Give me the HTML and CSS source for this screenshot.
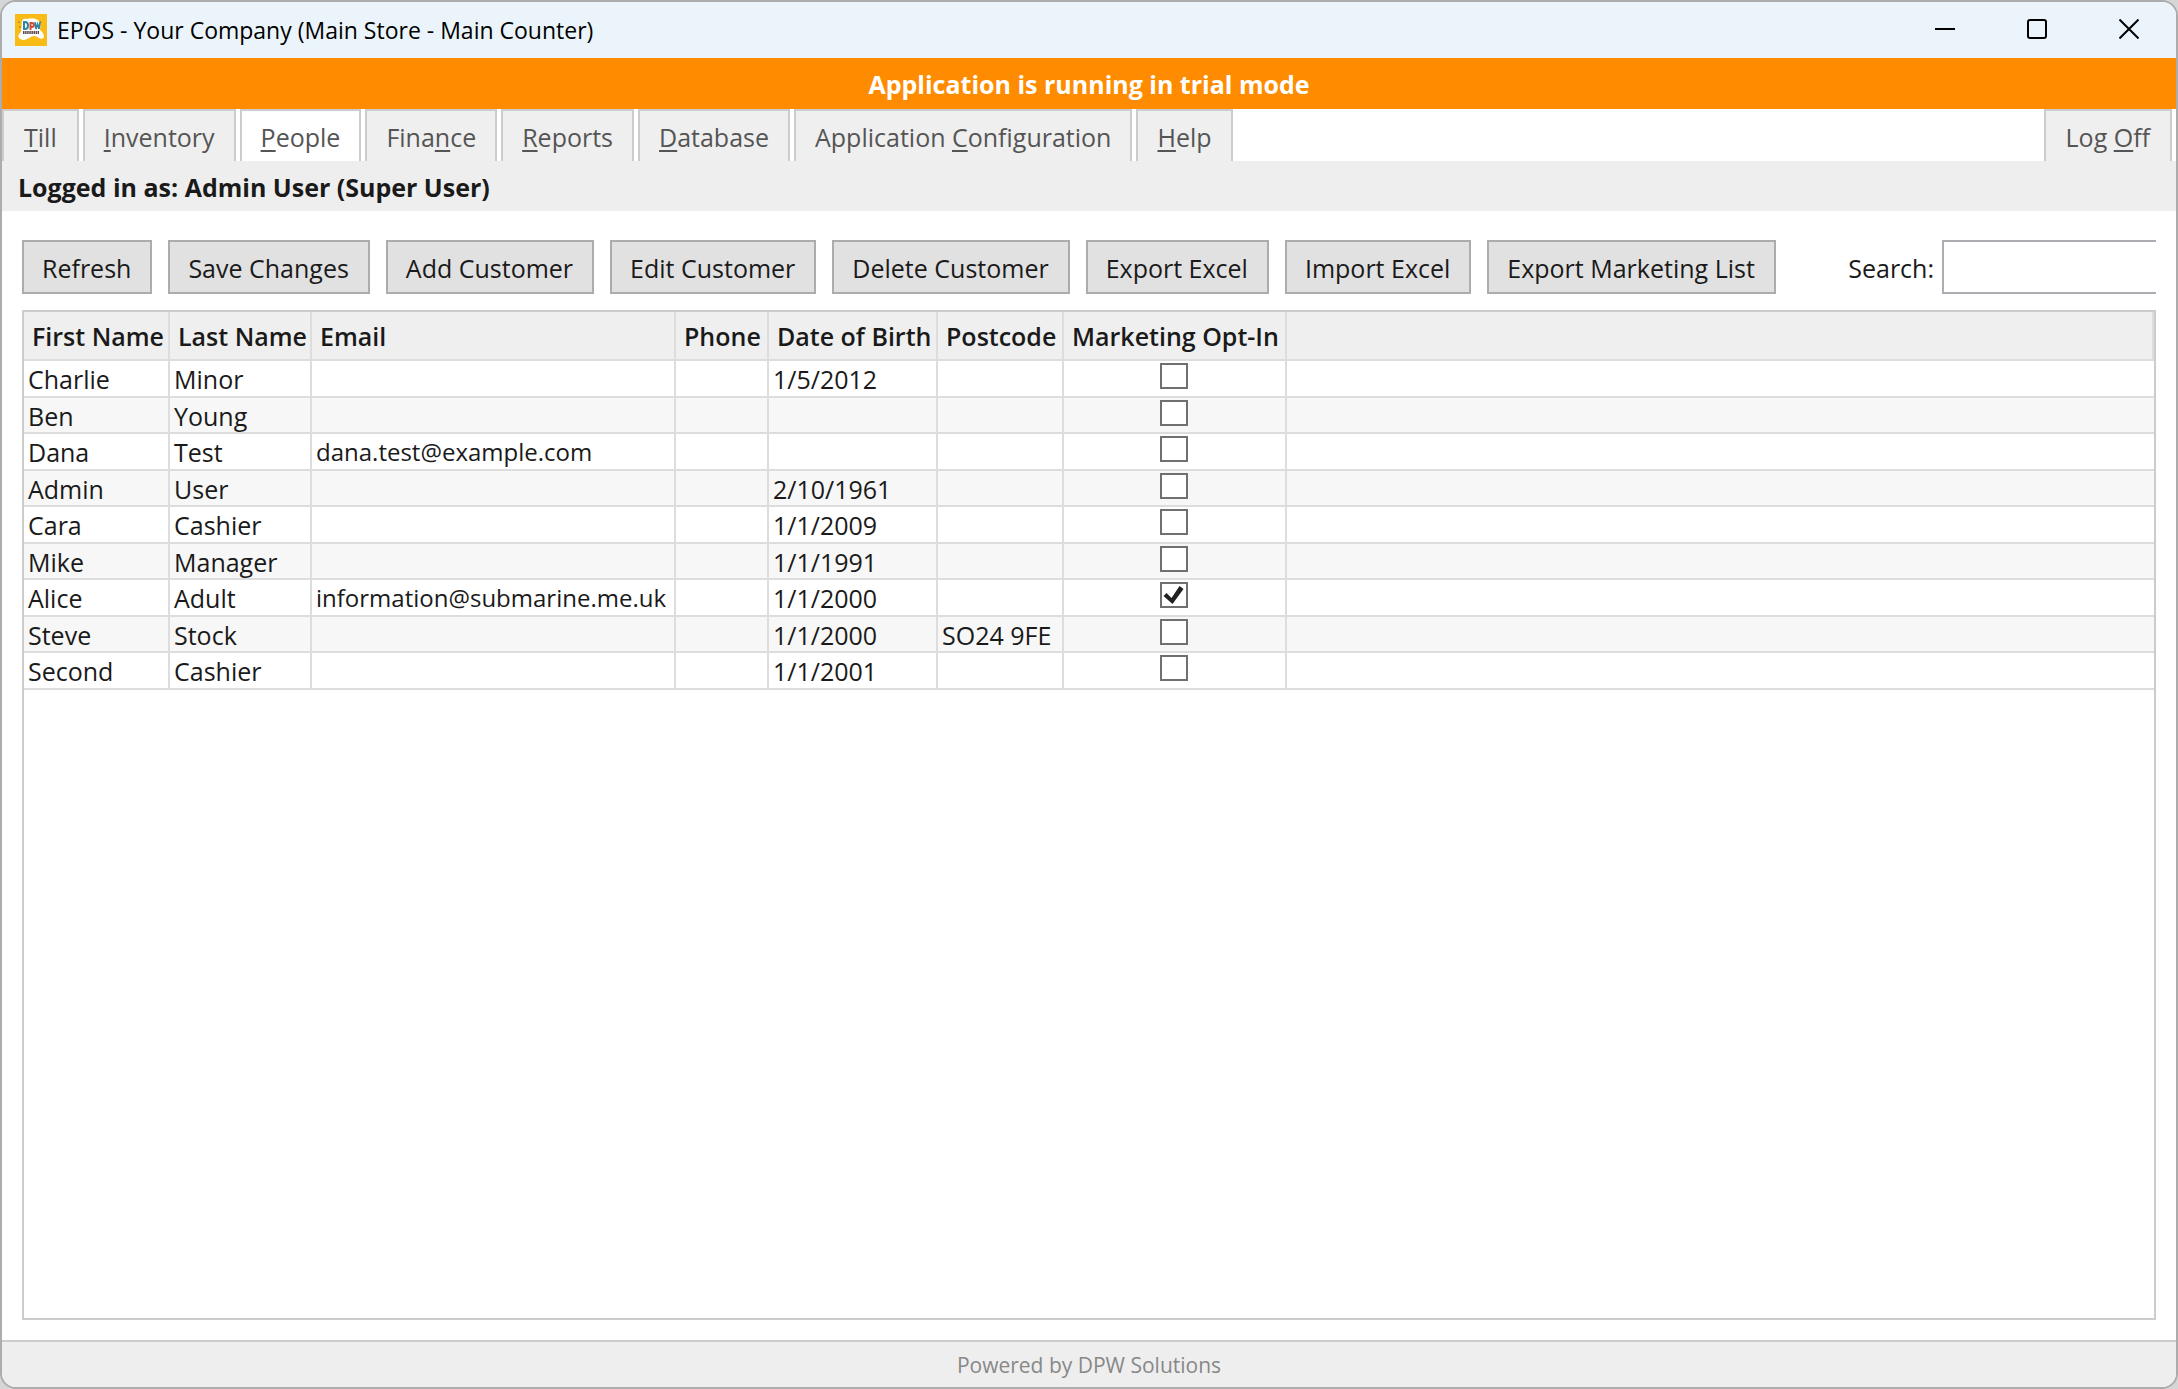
FILE: index.html
```html
<!DOCTYPE html>
<html lang="en">
<head>
<meta charset="utf-8">
<title>EPOS - Your Company (Main Store - Main Counter)</title>
<link rel="stylesheet" href="styles.css">
</head>
<body>
<div class="window">
  <header class="titlebar">
    <svg class="app-icon" viewBox="0 0 32 32" aria-hidden="true">
      <rect width="32" height="32" fill="#f9bb16"/>
      <path d="M7 7 Q8 4 12 5 Q18 3 23 6 Q26 9 25 16 Q29 19 29 23 Q28 26 24 24 Q19 20 14 24 Q8 28 4 24 Q2 21 6 18 Z" fill="#fff"/>
      <path d="M4 7v2M5 12v2M25 7l1 2" stroke="#8a7a3a" stroke-width="1"/>
      <g fill="none" stroke-width="2">
        <path d="M9 8v7h1q3 0 3-3.500t-3-3.500z" stroke="#2b86a8"/>
        <path d="M15.500 16v-7h1q2.500 0 2.500 2t-2.500 2h-1" stroke="#d9482f"/>
        <path d="M20 8l1 7 1.500-5 1.500 5 1-7" stroke="#2b86a8" stroke-width="1.600"/>
      </g>
      <path d="M8 18.500h16" stroke="#5b4a4a" stroke-width="3" stroke-dasharray="1.500 .6"/>
    </svg>
    <h1 class="title">EPOS - Your Company (Main Store - Main Counter)</h1>
    <div class="caption-buttons">
      <button class="caption-button" type="button" aria-label="Minimize"><svg viewBox="0 0 20 20"><path d="M0 10h20"/></svg></button>
      <button class="caption-button" type="button" aria-label="Maximize"><svg viewBox="0 0 20 20"><rect x="1" y="1" width="18" height="18" rx="2"/></svg></button>
      <button class="caption-button" type="button" aria-label="Close"><svg viewBox="0 0 20 20"><path d="M0.500 0.500l19 19M19.500 0.500l-19 19"/></svg></button>
    </div>
  </header>
  <div class="trial">Application is running in trial mode</div>
  <nav class="tabs">
    <button class="tab tab-first" type="button"><u>T</u>ill</button>
    <button class="tab" type="button"><u>I</u>nventory</button>
    <button class="tab tab-active" type="button"><u>P</u>eople</button>
    <button class="tab" type="button">Fina<u>n</u>ce</button>
    <button class="tab" type="button"><u>R</u>eports</button>
    <button class="tab" type="button"><u>D</u>atabase</button>
    <button class="tab" type="button">Application <u>C</u>onfiguration</button>
    <button class="tab" type="button"><u>H</u>elp</button>
    <button class="tab tab-end" type="button">Log <u>O</u>ff</button>
  </nav>
  <div class="login">Logged in as: Admin User (Super User)</div>
  <main class="content">
    <div class="toolbar">
      <button class="button" type="button">Refresh</button>
      <button class="button" type="button">Save Changes</button>
      <button class="button" type="button">Add Customer</button>
      <button class="button" type="button">Edit Customer</button>
      <button class="button" type="button">Delete Customer</button>
      <button class="button" type="button">Export Excel</button>
      <button class="button" type="button">Import Excel</button>
      <button class="button" type="button">Export Marketing List</button>
      <label class="search-label" for="search">Search:</label>
      <input class="search" id="search" type="text">
    </div>
    <div class="grid">
      <table class="customers">
        <colgroup>
          <col class="col-first"><col class="col-last"><col class="col-email"><col class="col-phone"><col class="col-dob"><col class="col-postcode"><col class="col-optin"><col>
        </colgroup>
        <thead>
          <tr><th>First Name</th><th>Last Name</th><th>Email</th><th>Phone</th><th>Date of Birth</th><th>Postcode</th><th>Marketing Opt-In</th><th></th></tr>
        </thead>
        <tbody>
          <tr><td>Charlie</td><td>Minor</td><td></td><td></td><td>1/5/2012</td><td></td><td class="optin"><input class="check" type="checkbox" aria-label="Marketing opt-in, Charlie Minor"></td><td></td></tr>
          <tr><td>Ben</td><td>Young</td><td></td><td></td><td></td><td></td><td class="optin"><input class="check" type="checkbox" aria-label="Marketing opt-in, Ben Young"></td><td></td></tr>
          <tr><td>Dana</td><td>Test</td><td class="email">dana.test@example.com</td><td></td><td></td><td></td><td class="optin"><input class="check" type="checkbox" aria-label="Marketing opt-in, Dana Test"></td><td></td></tr>
          <tr><td>Admin</td><td>User</td><td></td><td></td><td>2/10/1961</td><td></td><td class="optin"><input class="check" type="checkbox" aria-label="Marketing opt-in, Admin User"></td><td></td></tr>
          <tr><td>Cara</td><td>Cashier</td><td></td><td></td><td>1/1/2009</td><td></td><td class="optin"><input class="check" type="checkbox" aria-label="Marketing opt-in, Cara Cashier"></td><td></td></tr>
          <tr><td>Mike</td><td>Manager</td><td></td><td></td><td>1/1/1991</td><td></td><td class="optin"><input class="check" type="checkbox" aria-label="Marketing opt-in, Mike Manager"></td><td></td></tr>
          <tr><td>Alice</td><td>Adult</td><td class="email">information@submarine.me.uk</td><td></td><td>1/1/2000</td><td></td><td class="optin"><input class="check" type="checkbox" checked aria-label="Marketing opt-in, Alice Adult"></td><td></td></tr>
          <tr><td>Steve</td><td>Stock</td><td></td><td></td><td>1/1/2000</td><td>SO24 9FE</td><td class="optin"><input class="check" type="checkbox" aria-label="Marketing opt-in, Steve Stock"></td><td></td></tr>
          <tr><td>Second</td><td>Cashier</td><td></td><td></td><td>1/1/2001</td><td></td><td class="optin"><input class="check" type="checkbox" aria-label="Marketing opt-in, Second Cashier"></td><td></td></tr>
        </tbody>
      </table>
    </div>
  </main>
  <footer class="footer">Powered by DPW Solutions</footer>
</div>
</body>
</html>
```
FILE: styles.css
```css
* {
  box-sizing: border-box;
}

body {
  margin: 0;
  background: #d6d6d6;
  color: #1a1a1a;
  font: 25px/32px "Open Sans", "Noto Sans", sans-serif;
}

button,
input {
  margin: 0;
  color: inherit;
  font: inherit;
}

.window {
  display: flex;
  flex-direction: column;
  min-height: 100vh;
  overflow: hidden;
  border: 2px solid #acacac;
  border-radius: 16px;
  background: #fff;
}

.titlebar {
  display: flex;
  align-items: center;
  height: 56px;
  padding-left: 13px;
  background: #ebf4fa;
}

.app-icon {
  width: 32px;
  height: 32px;
}

.title {
  margin: 0 0 0 10px;
  color: #000;
  font-size: 23px;
  font-weight: 400;
}

.caption-buttons {
  display: flex;
  align-self: stretch;
  margin-left: auto;
}

.caption-button {
  display: flex;
  align-items: center;
  justify-content: center;
  width: 92px;
  padding: 0 2px 2px 0;
  border: 0;
  background: none;
}

.caption-button svg {
  width: 20px;
  height: 20px;
  fill: none;
  stroke: #000;
  stroke-width: 2;
}

.trial {
  padding: 10px 0 9px;
  background: #ff8c00;
  color: #fff;
  font-weight: 700;
  text-align: center;
}

.tabs {
  display: flex;
  gap: 4px;
  padding-right: 4px;
}

.tab {
  height: 52px;
  padding: 2px 19px 0;
  border: 2px solid #ccc;
  border-bottom: 0;
  background: #efefef;
  color: #555;
  white-space: nowrap;
}

.tab-first {
  padding: 2px 20px 0;
}

.tab-active {
  background: #fff;
}

.tab-end {
  margin-left: auto;
  padding: 2px 20px 0;
}

.tab u {
  text-decoration-thickness: 2px;
  text-underline-offset: 3px;
}

.login {
  padding: 10px 16px 8px;
  background: #eee;
  font-weight: 700;
}

.content {
  display: flex;
  flex: 1;
  flex-direction: column;
  gap: 16px;
  padding: 29px 20px 20px;
}

.toolbar {
  display: flex;
  gap: 16px;
}

.button {
  height: 54px;
  padding: 2px 19px 0 18px;
  border: 2px solid #acacac;
  background: #e1e1e1;
  white-space: nowrap;
}

.search-label {
  align-self: center;
  margin-left: auto;
  padding-top: 2px;
}

.search {
  width: 214px;
  height: 54px;
  margin-left: -8px;
  border: 2px solid #abadb3;
  border-right: 0;
  border-radius: 0;
  background: #fff;
}

.grid {
  flex: 1;
  border: 2px solid #ccc;
}

.customers {
  width: 100%;
  border-spacing: 0;
  table-layout: fixed;
}

.col-first { width: 146px; }
.col-last { width: 142px; }
.col-email { width: 364px; }
.col-phone { width: 93px; }
.col-dob { width: 169px; }
.col-postcode { width: 126px; }
.col-optin { width: 223px; }

.customers th,
.customers td {
  border-right: 2px solid #ddd;
  border-bottom: 2px solid #ddd;
  text-align: left;
  white-space: nowrap;
}

.customers th {
  height: 49px;
  padding: 0 0 0 8px;
  background: #efefef;
  font-weight: 600;
}

.customers td {
  height: 36px;
  padding: 2px 0 0 4px;
  vertical-align: top;
}

.customers tr:nth-child(odd) td {
  height: 37px;
}

.customers tr:nth-child(even) td {
  background: #f7f7f7;
}

.customers td:last-child {
  border-right: 0;
}

.customers .email {
  font-size: 24px;
}

.customers .optin {
  padding: 2px 2px 0 0;
}

.check {
  display: block;
  width: 28px;
  height: 26px;
  margin: 0 auto;
  appearance: none;
  border: 2px solid #707070;
  background: #fff;
}

.check:checked::before {
  display: block;
  height: 22px;
  background: #212121;
  clip-path: polygon(2px 12px, 5px 9px, 10px 14px, 18px 2px, 22px 5px, 11px 20px);
  content: "";
}

.footer {
  padding: 7px 0 6px;
  border-top: 2px solid #ccc;
  background: #eee;
  color: #888;
  font-size: 21px;
  text-align: center;
}
```
